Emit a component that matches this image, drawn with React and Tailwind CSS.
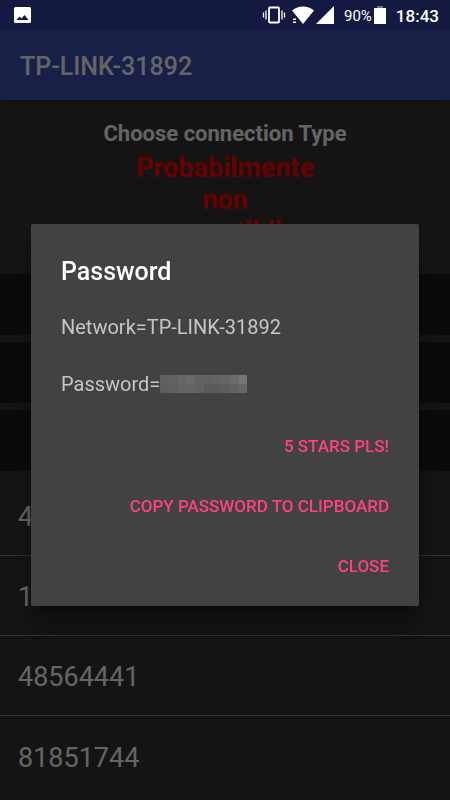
import { useState } from "react";

const PINS = ["48563710", "12345670", "48564441", "81851744"];

const MASK = [
  ["#606060", "#626262", "#656565", "#696969", "#626262", "#626262", "#646464", "#666666", "#6c6c6c", "#757575"],
  ["#5e5e5e", "#606060", "#646464", "#656565", "#616161", "#5a5a5a", "#5a5a5a", "#5e5e5e", "#626262", "#676767"],
];

function StatusBar() {
  return (
    <div className="relative z-20 flex h-[30px] items-center bg-[#131940] pr-[11px] pl-3.5 text-white">
      <svg className="h-4 w-[17px]" viewBox="0 0 17 16" fill="currentColor">
        <path
          fillRule="evenodd"
          d="M1.500 0h14A1.500 1.500 0 0 1 17 1.500v13a1.500 1.500 0 0 1-1.500 1.500h-14A1.500 1.500 0 0 1 0 14.500v-13A1.500 1.500 0 0 1 1.500 0zM2.500 13h12l-4-5-3 3.500-2-2z"
        />
      </svg>
      <div className="ml-auto flex items-center">
        <svg className="h-[18px] w-6" viewBox="0 0 24 18" fill="none" stroke="currentColor">
          <rect x="7" y="1.500" width="10" height="15" rx="1" strokeWidth="1.800" />
          <path d="M4 4.500v9M20 4.500v9M1.500 6.500v5M22.500 6.500v5" strokeWidth="1.300" />
        </svg>
        <svg className="ml-1.5 h-[18px] w-[22px]" viewBox="0 0 22 18" fill="currentColor">
          <path d="M0 4.500C6.500-.8 15.500-.8 22 4.500L11 18z" />
          <path d="M1 12.500h3v1.500H1zM1 15.500h3V17H1z" />
        </svg>
        <svg className="ml-0.5 h-[18px] w-[18px]" viewBox="0 0 18 18" fill="currentColor">
          <path d="M18 0v18H0z" />
        </svg>
        <span className="ml-2.5 pt-0.5 text-[15px] leading-7">90%</span>
        <svg className="ml-0.5 h-[18px] w-3" viewBox="0 0 12 18" fill="currentColor">
          <path d="M3 0h6v2H3z" opacity=".4" />
          <path d="M0 2h12v16H0z" />
        </svg>
        <span className="ml-2.5 pt-0.5 text-[17px] leading-7 font-medium">18:43</span>
      </div>
    </div>
  );
}

function DialogButton({ children, onClick }) {
  return (
    <button
      type="button"
      onClick={onClick}
      className="h-[60px] text-[17px] font-medium text-[#ff4081] uppercase"
    >
      {children}
    </button>
  );
}

function PasswordDialog({ onClose }) {
  return (
    <div className="fixed inset-0 z-10 flex items-center justify-center bg-black/60 px-[31px] pt-[30px]">
      <div
        role="dialog"
        aria-labelledby="dialog-title"
        className="w-full max-w-lg rounded-xs bg-[#424242] px-[30px] pt-8 pb-[9px] shadow-xl shadow-black/40"
      >
        <h2 id="dialog-title" className="text-[25px] leading-8 font-medium text-white">
          Password
        </h2>
        <p className="mt-[25px] text-xl leading-7 text-[#c6c6c6]">Network=TP-LINK-31892</p>
        <div className="mt-[29px] flex items-center text-xl leading-7 text-[#c6c6c6]">
          Password=
          <div className="grid w-[87px] grid-cols-10">
            {MASK.flat().map((color, i) => (
              <span key={i} className="h-[9px]" style={{ backgroundColor: color }} />
            ))}
          </div>
        </div>
        <div className="mt-[19px] flex flex-col items-end">
          <DialogButton>5 stars pls!</DialogButton>
          <DialogButton>Copy password to clipboard</DialogButton>
          <DialogButton onClick={onClose}>Close</DialogButton>
        </div>
      </div>
    </div>
  );
}

export default function App() {
  const [open, setOpen] = useState(true);

  return (
    <div className="h-screen overflow-hidden bg-[#323232] font-[Roboto,sans-serif]">
      <StatusBar />
      <header className="flex h-[70px] items-center bg-[#3f51b5] px-5 pt-1 shadow-md">
        <h1 className="text-[25px] font-medium text-[#fafafa]">TP-LINK-31892</h1>
      </header>

      <main>
        <div className="h-[174px] overflow-hidden pt-[18px] text-center font-bold">
          <h2 className="text-[22px] leading-8 text-[#fafafa]">Choose connection Type</h2>
          <p className="mx-auto w-[190px] pt-0.5 text-[27px] leading-8 text-[#ff0000]">
            Probabilmente non compatibile
          </p>
        </div>
        <div className="flex flex-col gap-[7px]">
          <button type="button" aria-label="Automatic pin" className="h-[61px] bg-[#1a1a1a]" />
          <button type="button" aria-label="Custom pin" className="h-[61px] bg-[#1a1a1a]" />
          <button type="button" aria-label="Show password" className="h-[61px] bg-[#1a1a1a]" />
        </div>
        <ul className="mt-[5px] divide-y divide-[#7a7a7a]">
          {PINS.map((pin) => (
            <li key={pin} className="flex h-20 items-center px-[18px] pt-1 text-[27px] text-[#fafafa]">
              {pin}
            </li>
          ))}
        </ul>
      </main>

      {open && <PasswordDialog onClose={() => setOpen(false)} />}
    </div>
  );
}
